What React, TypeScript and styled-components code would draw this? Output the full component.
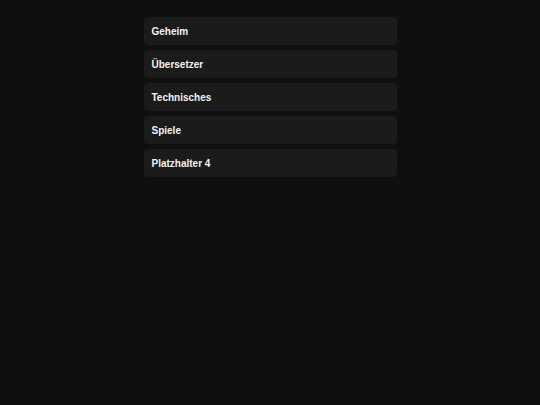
import React from 'react';
import styled, { createGlobalStyle } from 'styled-components';

const GlobalStyle = createGlobalStyle`
  html, body {
    margin: 0;
    padding: 0;
    background: #0f0f0f;
    font-family: "Liberation Sans", Arial, sans-serif;
  }
`;

const Page = styled.main`
  min-height: 405px;
  padding-top: 17px;
  box-sizing: border-box;
  display: flex;
  justify-content: center;
`;

const List = styled.nav`
  width: 253px;
  display: flex;
  flex-direction: column;
  gap: 5px;
`;

const Item = styled.div`
  height: 28px;
  box-sizing: border-box;
  padding: 0 8px;
  display: flex;
  align-items: center;
  background: #1b1b1b;
  border-radius: 4px;
  color: #f2f2f2;
  font-size: 10px;
  font-weight: 700;
  cursor: pointer;
`;

const items = ['Geheim', 'Übersetzer', 'Technisches', 'Spiele', 'Platzhalter 4'];

export default function App() {
  return (
    <>
      <GlobalStyle />
      <Page>
        <List>
          {items.map((label) => (
            <Item key={label}>{label}</Item>
          ))}
        </List>
      </Page>
    </>
  );
}
